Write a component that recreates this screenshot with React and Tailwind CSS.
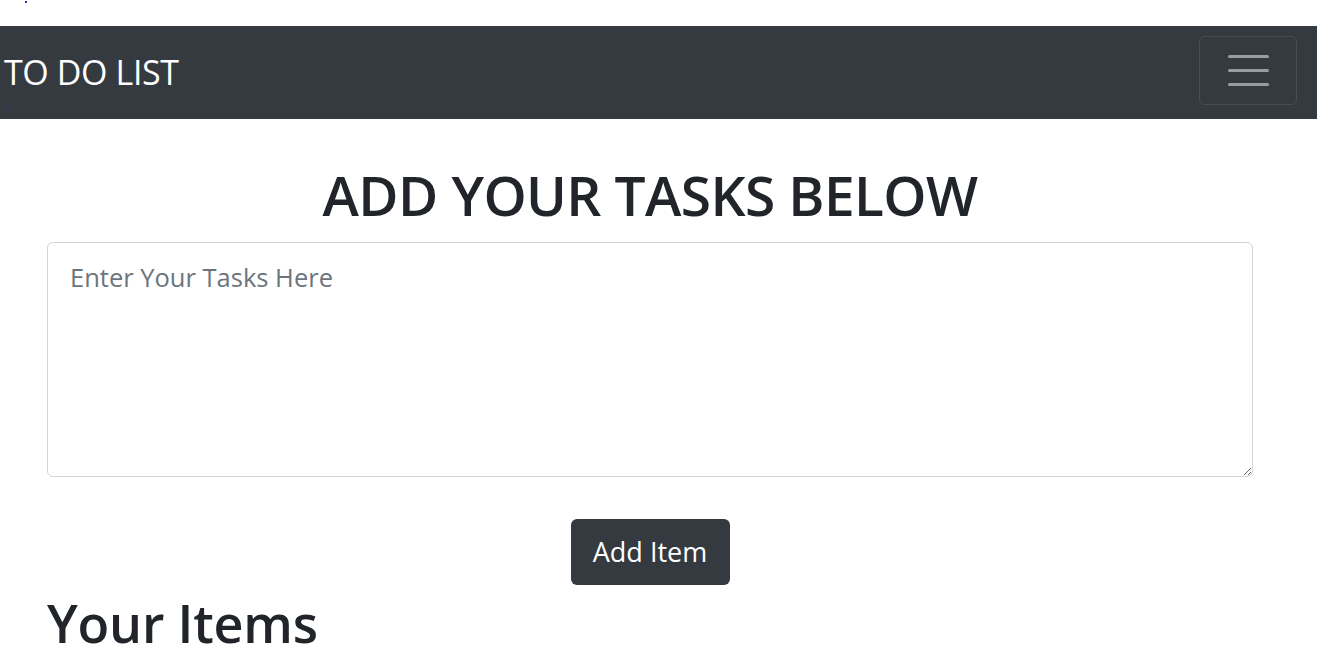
import React, { useState } from 'react';

const font = { fontFamily: '"Open Sans", "Noto Sans", sans-serif' };

function Toggler() {
  return (
    <button className="mb-[5px] flex h-[69px] w-[98px] flex-col items-center justify-center gap-[11px] rounded-[6px] border border-[rgba(255,255,255,0.1)]">
      <span className="block h-[3px] w-[41px] rounded-full bg-[#9a9da0]" />
      <span className="block h-[3px] w-[41px] rounded-full bg-[#9a9da0]" />
      <span className="block h-[3px] w-[41px] rounded-full bg-[#9a9da0]" />
    </button>
  );
}

export default function App() {
  const [text, setText] = useState('');

  return (
    <div className="min-h-screen bg-white text-[#212529]" style={font}>
      <div className="relative h-[26px]">
        <span className="absolute left-[25px] top-[1px] h-[2px] w-[2px] bg-[#3030c0]" />
      </div>

      <nav className="relative flex h-[93px] items-center justify-between bg-[#343a40] pl-[4px] pr-[20px]">
        <a className="mb-[2px] text-[34px] leading-none tracking-[-0.4px] text-white">TO DO LIST</a>
        <span className="absolute bottom-[12px] left-[5px] h-[1px] w-[2px] bg-[#3030c0]" />
        <Toggler />
      </nav>

      <div className="ml-[47px] w-[1206px]">
        <h1 className="mt-[43px] mb-[14px] text-center text-[55px] font-semibold leading-[1.2] tracking-[-0.6px]">
          ADD YOUR TASKS BELOW
        </h1>
        <textarea
          value={text}
          onChange={e => setText(e.target.value)}
          placeholder="Enter Your Tasks Here"
          className="block h-[235px] w-full rounded-[6px] border border-[#ced4da] px-[22px] py-[15px] text-[25.5px] leading-[1.5] outline-none placeholder:text-[#6c757d]"
        />
        <div className="mt-[42px] flex justify-center">
          <button className="h-[66px] w-[159px] rounded-[6px] bg-[#343a40] text-[27px] text-white">
            Add Item
          </button>
        </div>
        <h1 className="mt-[7px] text-[52px] font-semibold leading-[1.2] tracking-[-0.2px]">Your Items</h1>
      </div>
    </div>
  );
}
